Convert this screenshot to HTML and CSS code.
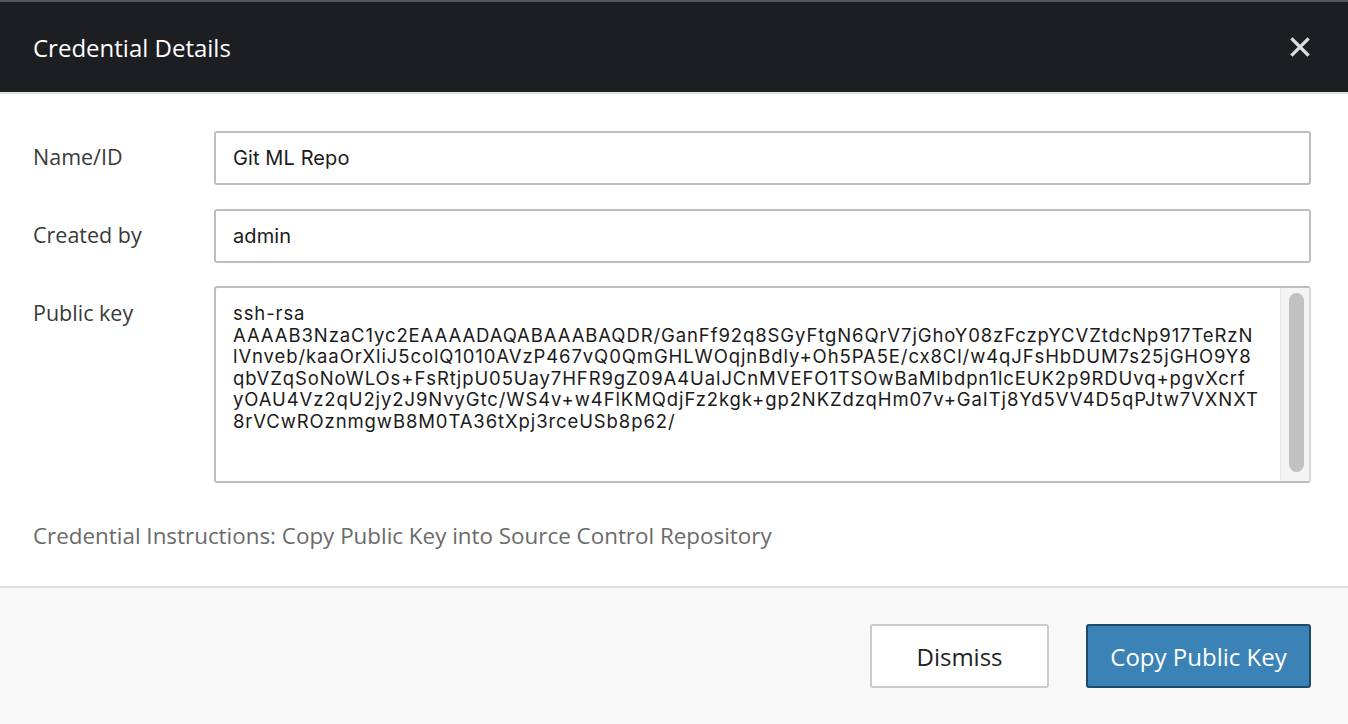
FILE: index.html
```html
<!DOCTYPE html>
<html lang="en">
<head>
<meta charset="utf-8">
<title>Credential Details</title>
<link rel="stylesheet" href="styles.css">
</head>
<body>
<div class="modal">
  <header class="modal-header">
    <h1 class="modal-title">Credential Details</h1>
    <button class="close-btn" aria-label="Close">
      <svg width="20" height="20" viewBox="0 0 20 20"><path d="M2.5 2.5 L17.5 17.5 M17.5 2.5 L2.5 17.5" stroke="#dcdcdc" stroke-width="3.2" stroke-linecap="square"/></svg>
    </button>
  </header>
  <main class="modal-body">
    <div class="field">
      <label class="field-label">Name/ID</label>
      <div class="input">Git ML Repo</div>
    </div>
    <div class="field">
      <label class="field-label">Created by</label>
      <div class="input">admin</div>
    </div>
    <div class="field">
      <label class="field-label">Public key</label>
      <div class="keybox">
        <div class="keytext">
          <div>ssh-rsa</div>
          <div>AAAAB3NzaC1yc2EAAAADAQABAAABAQDR/GanFf92q8SGyFtgN6QrV7jGhoY08zFczpYCVZtdcNp917TeRzN</div>
          <div>lVnveb/kaaOrXliJ5colQ1010AVzP467vQ0QmGHLWOqjnBdly+Oh5PA5E/cx8Cl/w4qJFsHbDUM7s25jGHO9Y8</div>
          <div>qbVZqSoNoWLOs+FsRtjpU05Uay7HFR9gZ09A4UalJCnMVEFO1TSOwBaMlbdpn1lcEUK2p9RDUvq+pgvXcrf</div>
          <div>yOAU4Vz2qU2jy2J9NvyGtc/WS4v+w4FlKMQdjFz2kgk+gp2NKZdzqHm07v+GaITj8Yd5VV4D5qPJtw7VXNXT</div>
          <div>8rVCwROznmgwB8M0TA36tXpj3rceUSb8p62/</div>
        </div>
        <div class="scrollbar"><div class="thumb"></div></div>
      </div>
    </div>
    <p class="instructions">Credential Instructions: Copy Public Key into Source Control Repository</p>
  </main>
  <footer class="modal-footer">
    <button class="btn btn-default">Dismiss</button>
    <button class="btn btn-primary">Copy Public Key</button>
  </footer>
</div>
</body>
</html>
```

FILE: styles.css
```css
* { box-sizing: border-box; }
html, body { margin: 0; padding: 0; }
body {
  width: 1348px;
  height: 724px;
  overflow: hidden;
  background: #ffffff;
  font-family: "Open Sans", "Noto Sans", sans-serif;
}
.modal {
  display: flex;
  flex-direction: column;
  height: 724px;
}
.modal-header {
  height: 94px;
  background: #1c1e22;
  border-top: 2px solid #555659;
  border-bottom: 2px solid #e3e3e3;
  display: flex;
  align-items: center;
  justify-content: space-between;
  padding: 0 37px 0 33px;
}
.modal-title {
  margin: 0;
  color: #ffffff;
  font-size: 24px;
  font-weight: 500;
}
.close-btn {
  background: none;
  border: 0;
  padding: 0;
  width: 22px;
  height: 22px;
  display: flex;
  align-items: center;
  justify-content: center;
}
.modal-body {
  padding: 37px 37px 0 33px;
  display: flex;
  flex-direction: column;
  gap: 24px;
  height: 492px;
}
.field {
  display: flex;
  align-items: flex-start;
}
.field-label {
  width: 181px;
  flex: none;
  line-height: 52px;
  font-size: 21.5px;
  color: #3a3a3a;
}
.input {
  flex: 1;
  height: 54px;
  border: 2px solid #bdbdbd;
  border-radius: 3px;
  padding: 0 17px;
  display: flex;
  align-items: center;
  font-family: "Inter", "Liberation Sans", sans-serif;
  font-size: 20px;
  letter-spacing: 0.1px;
  color: #1a1a1a;
}
.keybox {
  flex: 1;
  height: 197px;
  margin-top: -1px;
  border: 2px solid #bdbdbd;
  border-right-color: #d8d8d8;
  border-radius: 3px;
  display: flex;
  overflow: hidden;
}
.keytext {
  flex: 1;
  padding: 15px 17px 0 17px;
  font-family: "Inter", "Liberation Sans", sans-serif;
  font-size: 18.5px;
  letter-spacing: 0.9px;
  line-height: 21.5px;
  color: #1a1a1a;
  white-space: nowrap;
  overflow: hidden;
}
.scrollbar {
  width: 29px;
  flex: none;
  background: #f4f4f4;
  border-left: 1px solid #e6e6e6;
  padding: 5px 5px 9px 8px;
}
.thumb {
  height: 100%;
  background: #c1c1c1;
  border-radius: 8px;
}
.instructions {
  margin: 13px 0 0 0;
  font-size: 22.4px;
  font-weight: 500;
  color: #6a6a6a;
}
.modal-footer {
  flex: 1;
  background: #f8f8f8;
  border-top: 2px solid #e2e2e2;
  display: flex;
  justify-content: flex-end;
  align-items: flex-start;
  gap: 37px;
  padding: 36px 37px 0 0;
}
.btn {
  height: 64px;
  border-radius: 3px;
  font-family: "Open Sans", "Noto Sans", sans-serif;
  font-size: 24px;
  font-weight: 500;
  padding: 0;
}
.btn-default {
  width: 179px;
  background: #ffffff;
  border: 2px solid #cbcbcb;
  color: #222222;
}
.btn-primary {
  width: 225px;
  background: #3b82b6;
  border: 2px solid #1e4a69;
  color: #ffffff;
}
```
